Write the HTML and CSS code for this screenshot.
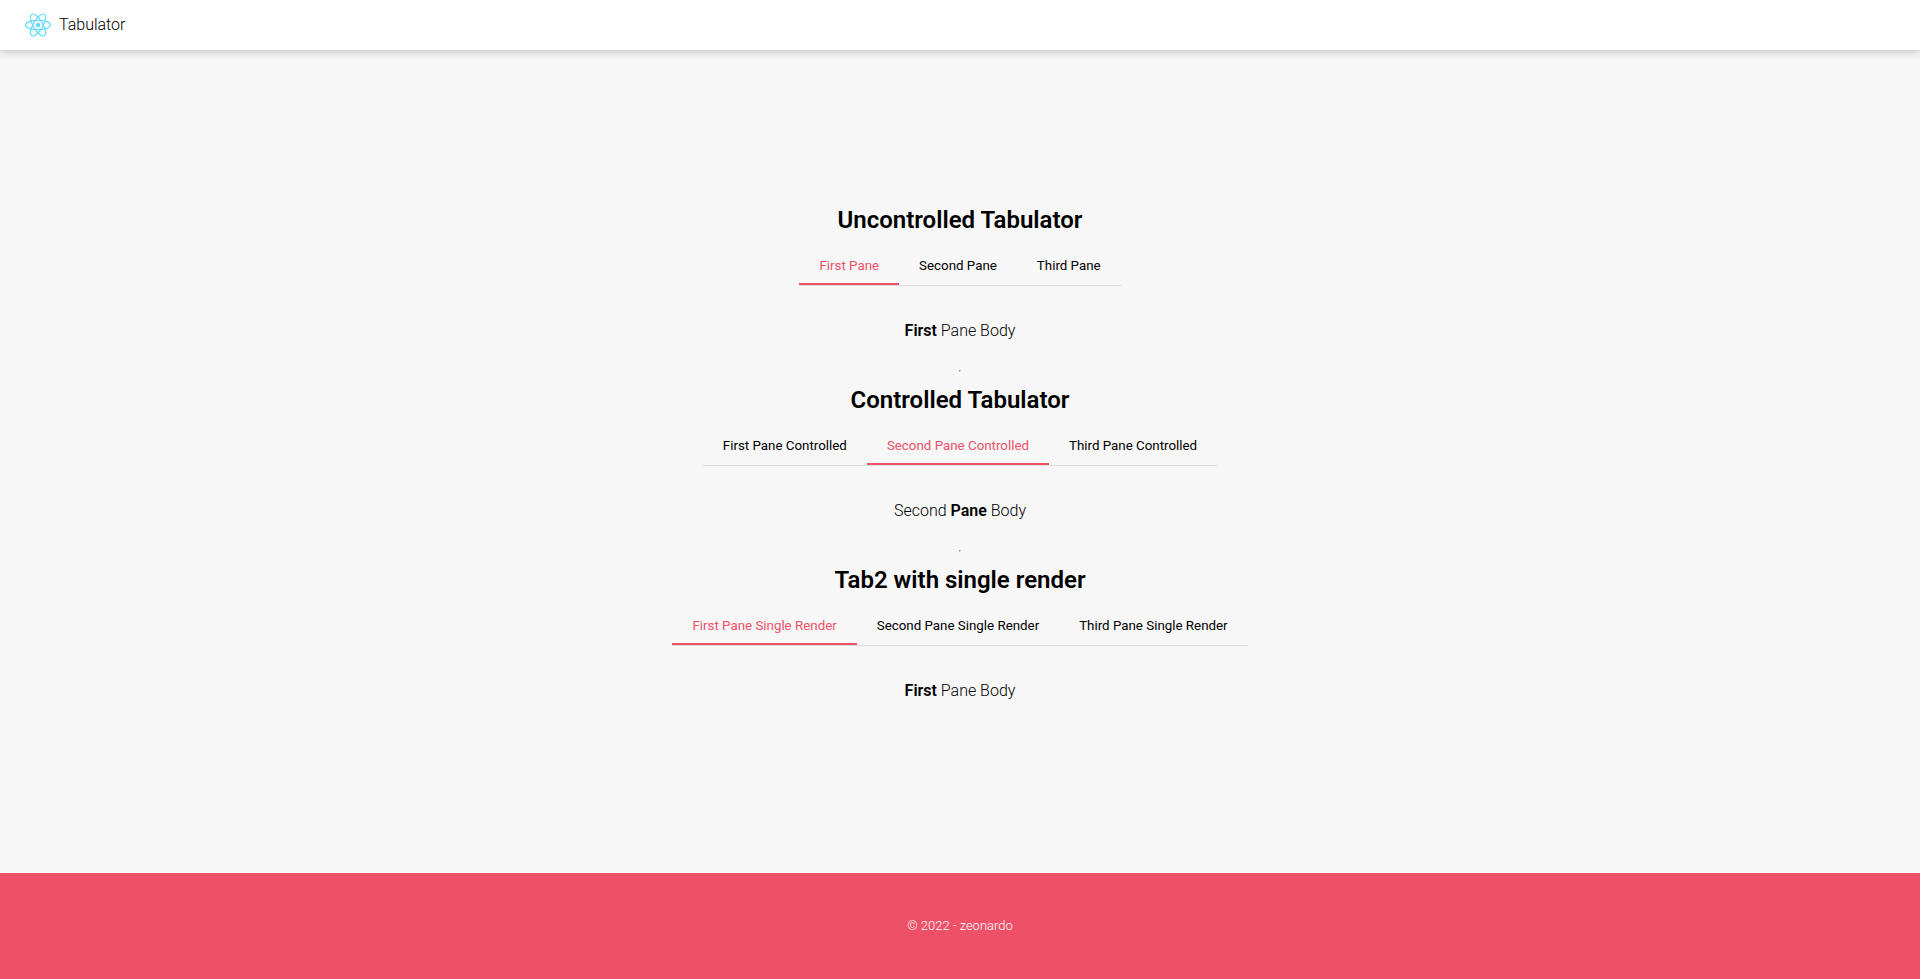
FILE: index.html
```
<!DOCTYPE html>
<html lang="en">
<head>
<meta charset="utf-8">
<title>Tabulator</title>
<link rel="stylesheet" href="styles.css">
</head>
<body>
<header class="header">
  <svg class="logo" viewBox="-11.5 -10.232 23 20.463" aria-hidden="true">
    <circle r="2.05" fill="#61dafb"/>
    <g fill="none" stroke="#61dafb">
      <ellipse rx="11" ry="4.2"/>
      <ellipse rx="11" ry="4.2" transform="rotate(60)"/>
      <ellipse rx="11" ry="4.2" transform="rotate(120)"/>
    </g>
  </svg>
  <span>Tabulator</span>
</header>
<main class="main">
  <section class="group">
    <h2 class="title">Uncontrolled Tabulator</h2>
    <div class="tabs" role="tablist">
      <button class="tab active" role="tab" aria-selected="true">First Pane</button>
      <button class="tab" role="tab" aria-selected="false">Second Pane</button>
      <button class="tab" role="tab" aria-selected="false">Third Pane</button>
    </div>
    <div class="pane" role="tabpanel"><b>First</b> Pane Body</div>
  </section>
  <hr class="divider">
  <section class="group">
    <h2 class="title">Controlled Tabulator</h2>
    <div class="tabs" role="tablist">
      <button class="tab" role="tab" aria-selected="false">First Pane Controlled</button>
      <button class="tab active" role="tab" aria-selected="true">Second Pane Controlled</button>
      <button class="tab" role="tab" aria-selected="false">Third Pane Controlled</button>
    </div>
    <div class="pane" role="tabpanel">Second <b>Pane</b> Body</div>
  </section>
  <hr class="divider">
  <section class="group">
    <h2 class="title">Tab2 with single render</h2>
    <div class="tabs" role="tablist">
      <button class="tab active" role="tab" aria-selected="true">First Pane Single Render</button>
      <button class="tab" role="tab" aria-selected="false">Second Pane Single Render</button>
      <button class="tab" role="tab" aria-selected="false">Third Pane Single Render</button>
    </div>
    <div class="pane" role="tabpanel"><b>First</b> Pane Body</div>
  </section>
</main>
<footer class="footer">© 2022 - zeonardo</footer>
</body>
</html>
```
FILE: styles.css
```
* {
  box-sizing: border-box;
}

body {
  display: flex;
  flex-direction: column;
  min-height: 100vh;
  margin: 0;
  background: #f7f7f7;
  color: #000;
  font: 300 16px/18px Roboto, sans-serif;
}

.header {
  display: flex;
  align-items: center;
  gap: 8px;
  height: 50px;
  padding: 0 25px;
  background: #fff;
  box-shadow: 0 0 10px rgba(0, 0, 0, 0.3);
}

.logo {
  width: 26px;
  height: 24px;
}

.main {
  flex: 1;
  display: flex;
  flex-direction: column;
  align-items: center;
  justify-content: center;
  padding-bottom: 1px;
}

.group {
  display: flex;
  flex-direction: column;
  align-items: center;
}

.title {
  margin: 14px 0;
  font-size: 24px;
  font-weight: 600;
  line-height: 28px;
}

.tabs {
  display: flex;
  border-bottom: 1px solid #ddd;
}

.tab {
  padding: 10px 20px;
  border: 0;
  border-bottom: 2px solid transparent;
  background: none;
  color: #000;
  font-family: Roboto, sans-serif;
  line-height: 15px;
  cursor: pointer;
}

.tab.active {
  border-bottom-color: #ee5067;
  color: #ee5067;
}

.pane {
  padding: 36px 0 30px;
}

.pane b {
  font-weight: 600;
}

.divider {
  width: 2px;
  margin: 0;
  border: 1px solid;
  border-color: #9a9a9a #eee #eee #9a9a9a;
}

.footer {
  display: flex;
  align-items: center;
  justify-content: center;
  height: 106px;
  background: #ee5067;
  color: #fff;
  font-size: 13px;
}
```
